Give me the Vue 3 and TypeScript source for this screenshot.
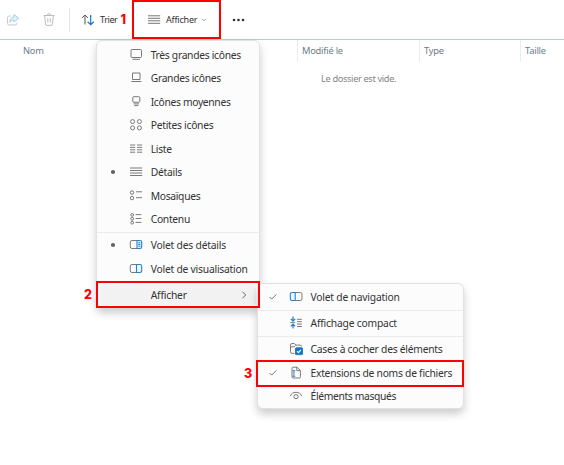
<script setup lang="ts">
interface Stroke { d: string; c?: string; f?: string; w?: number }
interface Item { label: string; icon?: string; mark?: 'dot' | 'check'; arrow?: boolean; callout?: string; sep?: boolean; ls: number }

const blue = '#2383cf'
const white = '#ffffff'

const icons: Record<string, Stroke[]> = {
  xl: [{ d: 'M3 1.5h8.5a1 1 0 0 1 1 1v6a1 1 0 0 1-1 1h-8.5a1 1 0 0 1-1-1v-6a1 1 0 0 1 1-1z' }, { d: 'M3.5 11.3h7.5' }],
  lg: [{ d: 'M3.5 2h7.5v6.5h-7.5z' }, { d: 'M2.3 10.5h10' }],
  md: [{ d: 'M4.8 1.7h5a1 1 0 0 1 1 1v3.6a1 1 0 0 1-1 1h-5a1 1 0 0 1-1-1v-3.6a1 1 0 0 1 1-1z' }, { d: 'M4.6 8.9h5.4M5.3 10.6h4' }],
  sm: [{ d: 'M1.6 3.6a2 2 0 1 0 4 0a2 2 0 1 0-4 0M8.4 3.6a2 2 0 1 0 4 0a2 2 0 1 0-4 0M1.6 9.9a2 2 0 1 0 4 0a2 2 0 1 0-4 0M8.4 9.9a2 2 0 1 0 4 0a2 2 0 1 0-4 0' }],
  list: [{ d: 'M1 3h5.2M8 3h5.2M1 5.4h5.2M8 5.4h5.2M1 7.8h5.2M8 7.8h5.2M1 10.2h5.2M8 10.2h5.2' }],
  details: [{ d: 'M1 3h12.2M1 5.5h12.2M1 8h12.2M1 10.5h12.2' }],
  tiles: [{ d: 'M1.3 3.6a1.7 1.7 0 1 0 3.4 0a1.7 1.7 0 1 0-3.4 0M1.3 9.1a1.7 1.7 0 1 0 3.4 0a1.7 1.7 0 1 0-3.4 0M7 2.8h6M7 8.7h6' }],
  content: [{ d: 'M1.8 2.9a1.4 1.4 0 1 0 2.8 0a1.4 1.4 0 1 0-2.8 0M1.8 6.8a1.4 1.4 0 1 0 2.8 0a1.4 1.4 0 1 0-2.8 0M1.8 10.7a1.4 1.4 0 1 0 2.8 0a1.4 1.4 0 1 0-2.8 0M6.6 2.6h5.8M6.6 6.5h5.8M6.6 10.4h5.8' }],
  paneDetails: [{ d: 'M8 2.5h-5a1.7 1.7 0 0 0-1.7 1.7v4.6a1.7 1.7 0 0 0 1.7 1.7h5' }, { d: 'M8 2.5h3a1.7 1.7 0 0 1 1.7 1.7v4.6a1.7 1.7 0 0 1-1.7 1.7h-3z', c: blue, f: '#e4f2fd', w: 1.1 }, { d: 'M9.3 4.8h2M9.3 6.5h2M9.3 8.2h2', c: blue, w: 1 }],
  panePreview: [{ d: 'M7.5 2.5h-4.5a1.7 1.7 0 0 0-1.7 1.7v4.6a1.7 1.7 0 0 0 1.7 1.7h4.5' }, { d: 'M7.5 2.5h3.5a1.7 1.7 0 0 1 1.7 1.7v4.6a1.7 1.7 0 0 1-1.7 1.7h-3.5z', c: blue, f: '#eef7fe', w: 1.1 }],
  paneNav: [{ d: 'M6 2.5h5.3a1.7 1.7 0 0 1 1.7 1.7v4.6a1.7 1.7 0 0 1-1.7 1.7h-5.3' }, { d: 'M6.2 2.5h-3.2a1.7 1.7 0 0 0-1.7 1.7v4.6a1.7 1.7 0 0 0 1.7 1.7h3.2z', c: blue, f: '#eef7fe', w: 1.1 }],
  compact: [{ d: 'M4 .6v4.4M1.8 2.9l2.2 2.2l2.2-2.2M4 12.6v-4.4M1.8 10.3l2.2-2.2l2.2 2.2', c: blue, w: 1.2 }, { d: 'M1.4 6.6h4.8M8 3.3h4.8M8 5.7h4.8M8 8.1h4.8M8 10.5h4.8' }],
  boxes: [{ d: 'M5.5 11.4h-2.4a1.6 1.6 0 0 1-1.6-1.6v-6.7a1.6 1.6 0 0 1 1.6-1.6h2.2l1.6 1.6h4.4a1.5 1.5 0 0 1 1.4 1.4M1.5 4.8h3.7l1.5-1.5' }, { d: 'M7.2 5.8h5.6a.7.7 0 0 1 .7.7v5.4a.7.7 0 0 1-.7.7h-5.6a.7.7 0 0 1-.7-.7v-5.4a.7.7 0 0 1 .7-.7z', c: '#0f74cc', f: '#0f74cc' }, { d: 'M8 9.2l1.4 1.4l2.6-2.8', c: white, w: 1.1 }],
  ext: [{ d: 'M4.2 1.2h3.8l3.4 3.4v6.2a1.2 1.2 0 0 1-1.2 1.2h-6a1.2 1.2 0 0 1-1.2-1.2v-8.4a1.2 1.2 0 0 1 1.2-1.2zM7.8 1.2v3.4h3.5' }, { d: 'M3.6 4.7h2.6M4.9 4.7v5.6M3.6 10.3h2.6', c: blue, w: 1 }],
  eye: [{ d: 'M1.3 7.2c1.2-5.2 10.2-5.2 11.4 0M4.9 7.6a2.1 2.1 0 1 0 4.2 0a2.1 2.1 0 1 0-4.2 0' }],
}

const mainMenu: Item[] = [
  { label: 'Très grandes icônes', icon: 'xl', ls: -0.3 },
  { label: 'Grandes icônes', icon: 'lg', ls: -0.3 },
  { label: 'Icônes moyennes', icon: 'md', ls: -0.32 },
  { label: 'Petites icônes', icon: 'sm', ls: -0.27 },
  { label: 'Liste', icon: 'list', ls: -0.3 },
  { label: 'Détails', icon: 'details', mark: 'dot', ls: -0.25 },
  { label: 'Mosaïques', icon: 'tiles', ls: -0.3 },
  { label: 'Contenu', icon: 'content', ls: -0.3 },
  { label: 'Volet des détails', icon: 'paneDetails', mark: 'dot', sep: true, ls: -0.2 },
  { label: 'Volet de visualisation', icon: 'panePreview', ls: -0.22 },
  { label: 'Afficher', arrow: true, sep: true, callout: '2', ls: -0.2 },
]

const subMenu: Item[] = [
  { label: 'Volet de navigation', icon: 'paneNav', mark: 'check', ls: -0.2 },
  { label: 'Affichage compact', icon: 'compact', sep: true, ls: -0.2 },
  { label: 'Cases à cocher des éléments', icon: 'boxes', sep: true, ls: -0.25 },
  { label: 'Extensions de noms de fichiers', icon: 'ext', mark: 'check', callout: '3', ls: -0.26 },
  { label: 'Éléments masqués', icon: 'eye', ls: -0.34 },
]

const menus = [
  { name: 'main', items: mainMenu },
  { name: 'sub', items: subMenu },
]
</script>

<template>
  <div class="window">
    <div class="toolbar">
      <svg class="share" viewBox="0 0 14 14" fill="none">
        <path d="M5 3H3.2A1.7 1.7 0 0 0 1.5 4.7v5.6A1.7 1.7 0 0 0 3.2 12h6.1a1.7 1.7 0 0 0 1.7-1.7V9.5" stroke="#c5c9cd" />
        <path d="M8 1.4l4.6 3.9L8 9V7.2C6 7.1 4.8 7.8 3.8 9.2C4 6.2 5.4 4.2 8 3.9z" stroke="#a5cdec" fill="#e3f1fb" stroke-linejoin="round" />
      </svg>
      <svg class="trash" viewBox="0 0 14 14" fill="none" stroke="#bcbcbc">
        <path d="M1.5 2.5h11M5.2 2.5a1.8 1.8 0 0 1 3.6 0M2.7 2.5l.8 8.5a1.4 1.4 0 0 0 1.4 1.4h4.2a1.4 1.4 0 0 0 1.4-1.4l.8-8.5M5.8 5.2v4.3M8.2 5.2v4.3" />
      </svg>
      <i class="divider"></i>
      <svg class="sort" viewBox="0 0 14 14" fill="none">
        <path d="M4 11.5V2M.9 5l3.1-3l3.1 3" stroke="#555" />
        <path d="M9.7 2v9.7M6.6 8.7l3.1 3l3.1-3" stroke="#1679cf" stroke-width="1.2" />
      </svg>
      <span class="sort-label">Trier</span>
      <b class="step">1</b>
      <div class="view-button">
        <svg class="view-icon" viewBox="0 0 14 14" stroke="#666"><path d="M1 2.8h12.2M1 5.3h12.2M1 7.8h12.2M1 10.3h12.2" stroke-width=".9" /></svg>
        <span>Afficher</span>
        <svg class="chevron" viewBox="0 0 6 6" fill="none" stroke="#b0b0b0"><path d="M.8 1.8l2.2 1.8l2.2-1.8" /></svg>
      </div>
      <svg class="more" viewBox="0 0 14 4" fill="#333"><circle cx="2" cy="2" r="1.3" /><circle cx="6.5" cy="2" r="1.3" /><circle cx="11" cy="2" r="1.3" /></svg>
    </div>
    <div class="columns">
      <span>Nom</span><span>Modifié le</span><span>Type</span><span>Taille</span>
    </div>
    <p class="empty">Le dossier est vide.</p>

    <div v-for="m in menus" :key="m.name" class="menu" :class="m.name">
      <template v-for="it in m.items" :key="it.label">
        <hr v-if="it.sep" />
        <div class="item" :class="{ active: it.arrow }">
          <span class="mark">
            <i v-if="it.mark === 'dot'" class="dot"></i>
            <svg v-if="it.mark === 'check'" class="check" viewBox="0 0 8 8" fill="none" stroke="#777"><path d="M.6 4l2.1 2.1l4.7-4.7" /></svg>
          </span>
          <svg class="icon" viewBox="0 0 14 14">
            <template v-if="it.icon">
              <path v-for="(s, i) in icons[it.icon]" :key="i" :d="s.d" :stroke="s.c ?? '#6b6b6b'" :fill="s.f ?? 'none'" :stroke-width="s.w ?? 0.9" />
            </template>
          </svg>
          <span class="label" :style="{ letterSpacing: it.ls + 'px' }">{{ it.label }}</span>
          <svg v-if="it.arrow" class="arrow" viewBox="0 0 8 8" fill="none" stroke="#666"><path d="M2.4 .7l3.3 3.3l-3.3 3.3" /></svg>
          <div v-if="it.callout" class="callout"><b>{{ it.callout }}</b></div>
        </div>
      </template>
    </div>
  </div>
</template>

<style>
body { margin: 0; background: #fff; overflow: hidden; }
</style>

<style scoped>
.window { position: relative; height: 465px; background: #fff; font-family: "Noto Sans", "Open Sans", sans-serif; font-size: 10.3px; color: #333; white-space: nowrap; overflow: hidden; }
.toolbar { display: flex; align-items: center; height: 39px; border-bottom: 1px solid #bacbd3; box-sizing: content-box; }
svg { display: block; flex: none; overflow: visible; }
.share { width: 14px; height: 14px; margin-left: 6px; }
.trash { width: 14px; height: 14px; margin-left: 22px; }
.divider { width: 1px; height: 24px; margin-left: 13px; background: #e4e4e4; }
.sort { width: 14px; height: 14px; margin-left: 11px; }
.sort-label { width: 20px; margin-left: 5px; font-size: 9px; letter-spacing: -0.4px; }
.step, .callout b { color: #f00; font: 800 12.5px/14px Inter, sans-serif; }
.step { width: 12px; text-indent: 0.5px; }
.view-button { display: flex; align-items: center; box-sizing: border-box; width: 89px; height: 39px; padding-left: 13px; border: 2px solid #f00; font-size: 9px; letter-spacing: -0.2px; }
.view-icon { width: 14px; height: 14px; margin-right: 5px; }
.chevron { width: 6px; height: 6px; margin-left: 4px; }
.more { width: 14px; height: 4px; margin-left: 11px; }
.columns { display: grid; grid-template-columns: 297px 122px 101px 44px; height: 21px; font-size: 9.3px; line-height: 22px; color: #6c7b8c; letter-spacing: -0.22px; }
.columns span { padding-left: 4px; border-left: 1px solid #e9edef; }
.columns span:first-child { padding-left: 23px; border-left: 0; }
.empty { margin: 11px 0 0 321px; font-size: 9.3px; line-height: 14px; letter-spacing: -0.38px; color: #858585; }
.menu { position: absolute; box-sizing: border-box; border: 1px solid #e2e2e2; border-radius: 6px; background: #fcfcfc; box-shadow: 0 5px 9px rgba(0, 0, 0, .2); }
.main { left: 96px; top: 40px; width: 164px; height: 268px; padding-top: 2px; }
.sub { left: 257px; top: 283px; width: 207px; height: 126px; padding-top: 1.5px; }
.menu hr { height: 1px; margin: 0.75px 0; border: 0; background: #ebebeb; }
.item { position: relative; display: flex; align-items: center; height: 23.5px; }
.item.active::before { content: ""; position: absolute; inset: 2px 3px; border-radius: 3px; background: #f2f2f2; }
.item > * { position: relative; }
.mark { display: flex; align-items: center; justify-content: center; width: 32px; }
.sub .mark { width: 31px; }
.dot { width: 3.5px; height: 3.5px; margin-bottom: 1px; border-radius: 50%; background: #666; }
.check { width: 8px; height: 8px; margin-right: 1px; }
.icon { width: 14px; height: 14px; margin-left: -0.5px; }
.label { margin-left: 8.2px; }
.sub .label { margin-left: 8px; }
.item .arrow { position: absolute; right: 11px; width: 8px; height: 8px; }
.item .callout { position: absolute; z-index: 3; left: -1px; right: -1px; top: -2px; height: 23px; border: 2px solid #f00; }
.sub .item .callout { left: -2px; top: -1.5px; }
.callout b { position: absolute; left: -14px; top: 5px; }
</style>
